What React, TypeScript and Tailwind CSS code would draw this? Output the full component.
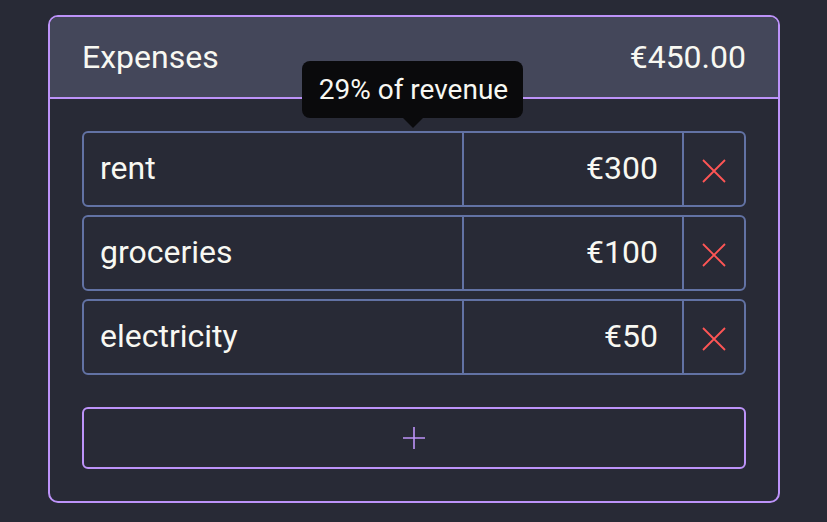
import React from "react";

const rows = [
  { name: "rent", amount: "€300" },
  { name: "groceries", amount: "€100" },
  { name: "electricity", amount: "€50" },
];

function XIcon() {
  return (
    <svg width="24" height="24" viewBox="0 0 24 24" fill="none">
      <path d="M1 1L23 23M23 1L1 23" stroke="#ff5555" strokeWidth="1.8" />
    </svg>
  );
}

export default function App() {
  return (
    <div
      className="min-h-screen bg-[#282a36] pt-[15px] pl-[48px] pr-[47px] text-[#f8f8f2]"
      style={{ fontFamily: "Roboto, 'Liberation Sans', sans-serif" }}
    >
      <div className="relative rounded-[10px] border-2 border-[#bd93f9]">
        <div className="flex h-[82px] items-center justify-between rounded-t-[8px] border-b-2 border-[#bd93f9] bg-[#44475a] px-[32px] pb-[1px] text-[32px] leading-none">
          <span>Expenses</span>
          <span>€450.00</span>
        </div>
        <div className="flex flex-col p-[32px]">
          <div className="flex flex-col gap-[8px]">
            {rows.map((r) => (
              <div
                key={r.name}
                className="flex h-[76px] rounded-[6px] border-2 border-[#6272a4] text-[32px] leading-none"
              >
                <div className="flex flex-1 items-center pl-[16px] pb-[2px]">{r.name}</div>
                <div className="flex w-[220px] items-center justify-end border-l-2 border-[#6272a4] pr-[24px] pb-[2px]">
                  {r.amount}
                </div>
                <div className="flex w-[62px] items-center justify-center border-l-2 border-[#6272a4] pt-[4px]">
                  <XIcon />
                </div>
              </div>
            ))}
          </div>
          <div className="mt-[32px] flex h-[62px] items-center justify-center rounded-[6px] border-2 border-[#bd93f9]">
            <svg width="22" height="22" viewBox="0 0 22 22" fill="none">
              <path d="M11 0V22M0 11H22" stroke="#bd93f9" strokeWidth="1.6" />
            </svg>
          </div>
        </div>
        <div className="absolute left-[252px] top-[44px] flex h-[57px] w-[221px] items-center justify-center rounded-[8px] bg-[#0a0a0c] pl-[2px] text-[28px] leading-none">
          29% of revenue
          <div className="absolute left-1/2 top-full h-0 w-0 -translate-x-1/2 border-x-[10px] border-t-[10px] border-x-transparent border-t-[#0a0a0c]" />
        </div>
      </div>
    </div>
  );
}
